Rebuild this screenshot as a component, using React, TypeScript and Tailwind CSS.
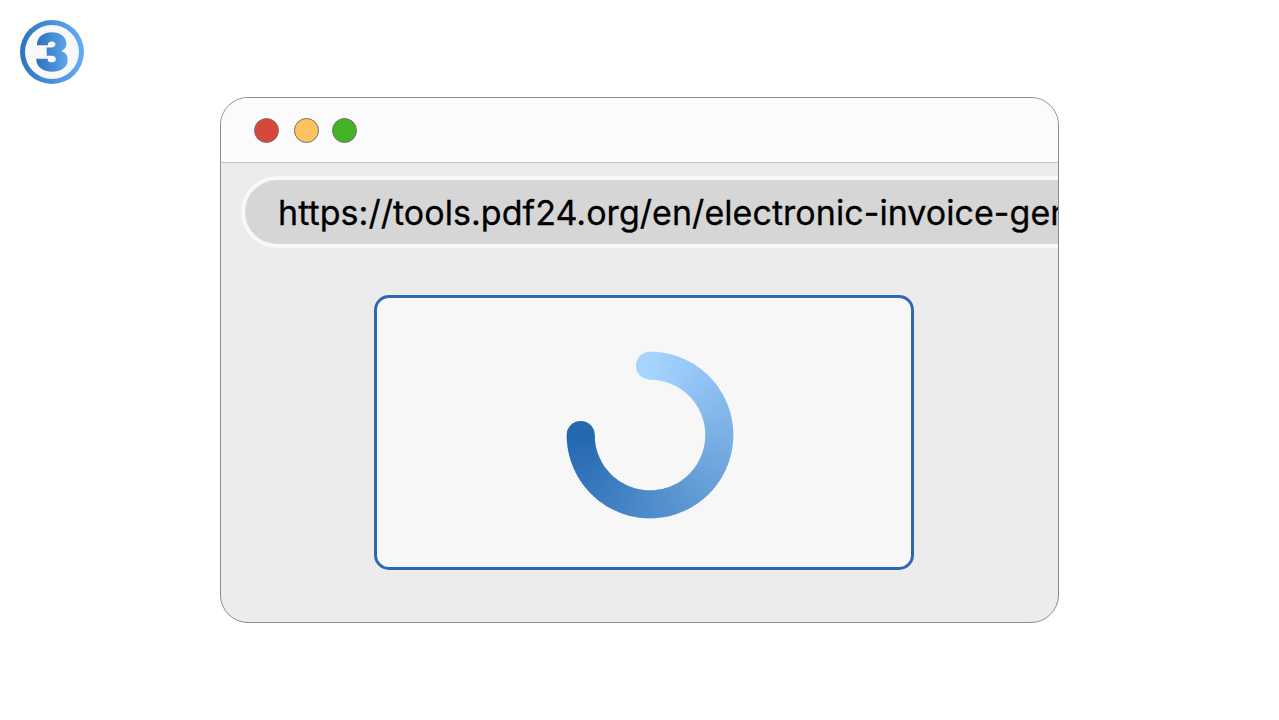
const SEGMENTS = 90;
const CX = 85;
const CY = 85;
const R = 69.3;

// spinner colour runs along the arc, so it is cut into short pieces
function mix(t: number) {
  const from = [165, 212, 255];
  const to = [36, 104, 176];
  const c = from.map((v, i) => Math.round(v + (to[i] - v) * t));
  return `rgb(${c[0]},${c[1]},${c[2]})`;
}

function point(deg: number) {
  const a = (deg * Math.PI) / 180;
  return [CX + R * Math.sin(a), CY - R * Math.cos(a)];
}

function Spinner() {
  const pieces = Array.from({ length: SEGMENTS }, (_, i) => {
    const a = (i / SEGMENTS) * 270;
    const b = ((i + 1) / SEGMENTS) * 270 + (i < SEGMENTS - 1 ? 0.6 : 0);
    const [x1, y1] = point(a);
    const [x2, y2] = point(b);
    return (
      <path
        key={i}
        d={`M ${x1} ${y1} A ${R} ${R} 0 0 1 ${x2} ${y2}`}
        fill="none"
        stroke={mix(i / (SEGMENTS - 1))}
        strokeWidth="28"
      />
    );
  });
  const end = point(270);

  return (
    <svg width="170" height="170" viewBox="0 0 170 170" className="block">
      <circle cx={CX} cy={CY - R} r="14" fill={mix(0)} />
      <circle cx={end[0]} cy={end[1]} r="14" fill={mix(1)} />
      {pieces}
    </svg>
  );
}

function Dot({ className }: { className: string }) {
  return <span className={`h-[25px] w-[25px] rounded-full border border-[#77736e] ${className}`} />;
}

export default function App() {
  return (
    <div className="h-[720px] w-[1279px] overflow-hidden bg-white pl-5 pt-5 font-['Inter',sans-serif]">
      <div className="h-16 w-16 rounded-full bg-gradient-to-r from-[#2d74bf] to-[#63aef6] p-[5px]">
        <div className="flex h-full w-full items-center justify-center rounded-full bg-[#f8f8f8]">
          <span className="bg-gradient-to-r from-[#2a6fba] to-[#60a8ee] bg-clip-text text-[50px] font-black leading-none text-transparent [-webkit-text-stroke:1.5px_transparent]">
            3
          </span>
        </div>
      </div>

      <div className="ml-[200px] mt-[13px] h-[526px] w-[839px] overflow-hidden rounded-[28px] border border-[#8c8c8c] bg-[#ececec]">
        <div className="flex h-[65px] items-center gap-[14px] border-b border-[#c4c4c4] bg-[#fbfbfb] pl-[33px] pt-[1px]">
          <Dot className="mr-[1px] bg-[#d8473c]" />
          <Dot className="bg-[#fdc35e]" />
          <Dot className="-ml-[1px] bg-[#42b324]" />
        </div>

        <div className="ml-5 mt-[13px] flex h-[72px] items-center overflow-hidden whitespace-nowrap rounded-l-full border-[4px] border-r-0 border-[#f8f8f8] bg-[#d6d6d6] pl-[33px] text-[34px] tracking-[0.05px] text-black [-webkit-text-stroke:0.3px_black]">
          https://tools.pdf24.org/en/electronic-invoice-generator
        </div>

        <div className="ml-[153px] mt-[47px] flex h-[275px] w-[540px] items-center justify-center rounded-[15px] border-[3px] border-[#2f68b2] bg-[#f7f7f7] pl-[11px] pt-[5px]">
          <Spinner />
        </div>
      </div>
    </div>
  );
}
